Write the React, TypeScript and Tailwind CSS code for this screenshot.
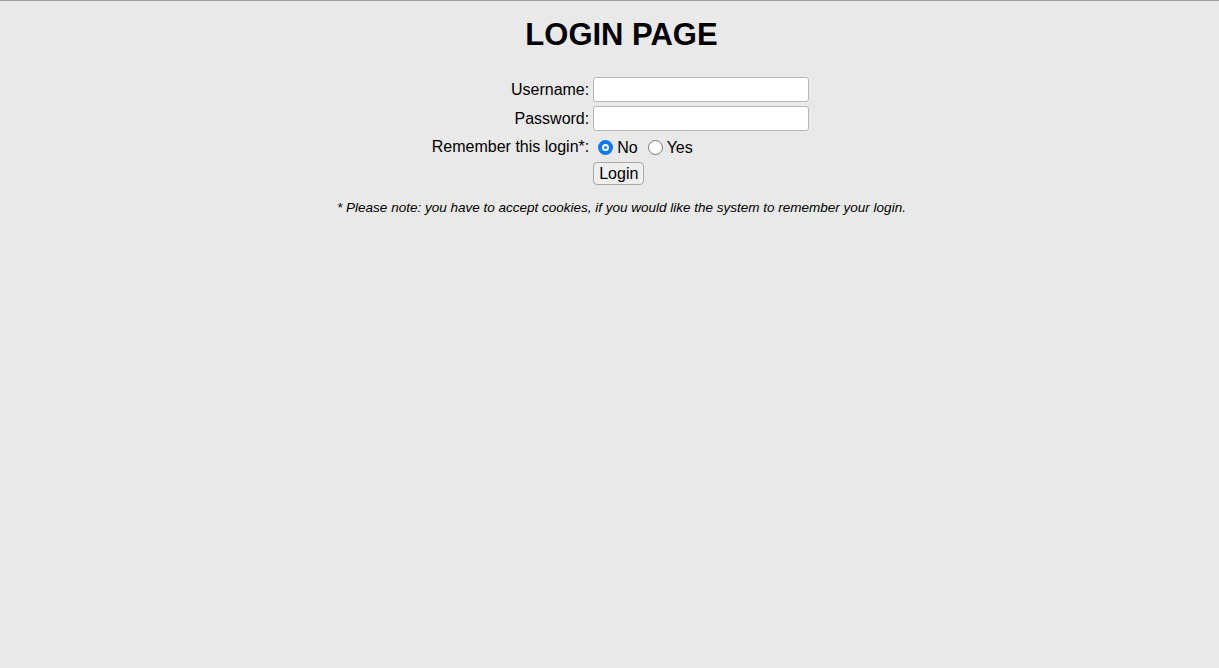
export default function App() {
  return (
    <div
      className="min-h-[668px] border-t border-[#a0a0a0] bg-[#e8e9e8] pl-[24px] text-black"
      style={{ fontFamily: '"Liberation Sans", Arial, sans-serif' }}
    >
      <h1 className="pt-[15px] text-center text-[31px] font-bold leading-[37px]">LOGIN PAGE</h1>

      <div className="mt-[24px] flex justify-center">
        <div className="mr-[2px] grid grid-cols-[auto_auto] gap-x-[4px] gap-y-[4px] text-[16px] leading-[18px]">
          <label className="flex items-center justify-end">Username:</label>
          <input
            type="text"
            className="h-[25px] w-[216px] rounded-[3px] border border-[#b4b4bc] bg-white px-1 outline-none"
          />

          <label className="flex items-center justify-end">Password:</label>
          <input
            type="password"
            className="h-[25px] w-[216px] rounded-[3px] border border-[#b4b4bc] bg-white px-1 outline-none"
          />

          <label className="flex h-[23px] items-center justify-end">Remember this login*:</label>
          <div className="flex h-[23px] items-center pt-[2px]">
            <span className="ml-[5px] flex h-[15px] w-[15px] items-center justify-center rounded-full bg-[#0a7aff]">
              <span className="h-[7px] w-[7px] rounded-full border-[2px] border-white bg-[#0a7aff]" />
            </span>
            <span className="ml-[4px]">No</span>
            <span className="ml-[10px] h-[15px] w-[15px] rounded-full border-[1.5px] border-[#777] bg-white" />
            <span className="ml-[4px]">Yes</span>
          </div>

          <div />
          <div>
            <button className="h-[23px] rounded-[4px] border border-[#a8a8ae] bg-[#efefef] px-[5px] text-[16px] leading-[18px]">
              Login
            </button>
          </div>
        </div>
      </div>

      <p className="mt-[15px] text-center text-[13.5px] italic leading-[16px]">
        * Please note: you have to accept cookies, if you would like the system to remember your login.
      </p>
    </div>
  );
}
